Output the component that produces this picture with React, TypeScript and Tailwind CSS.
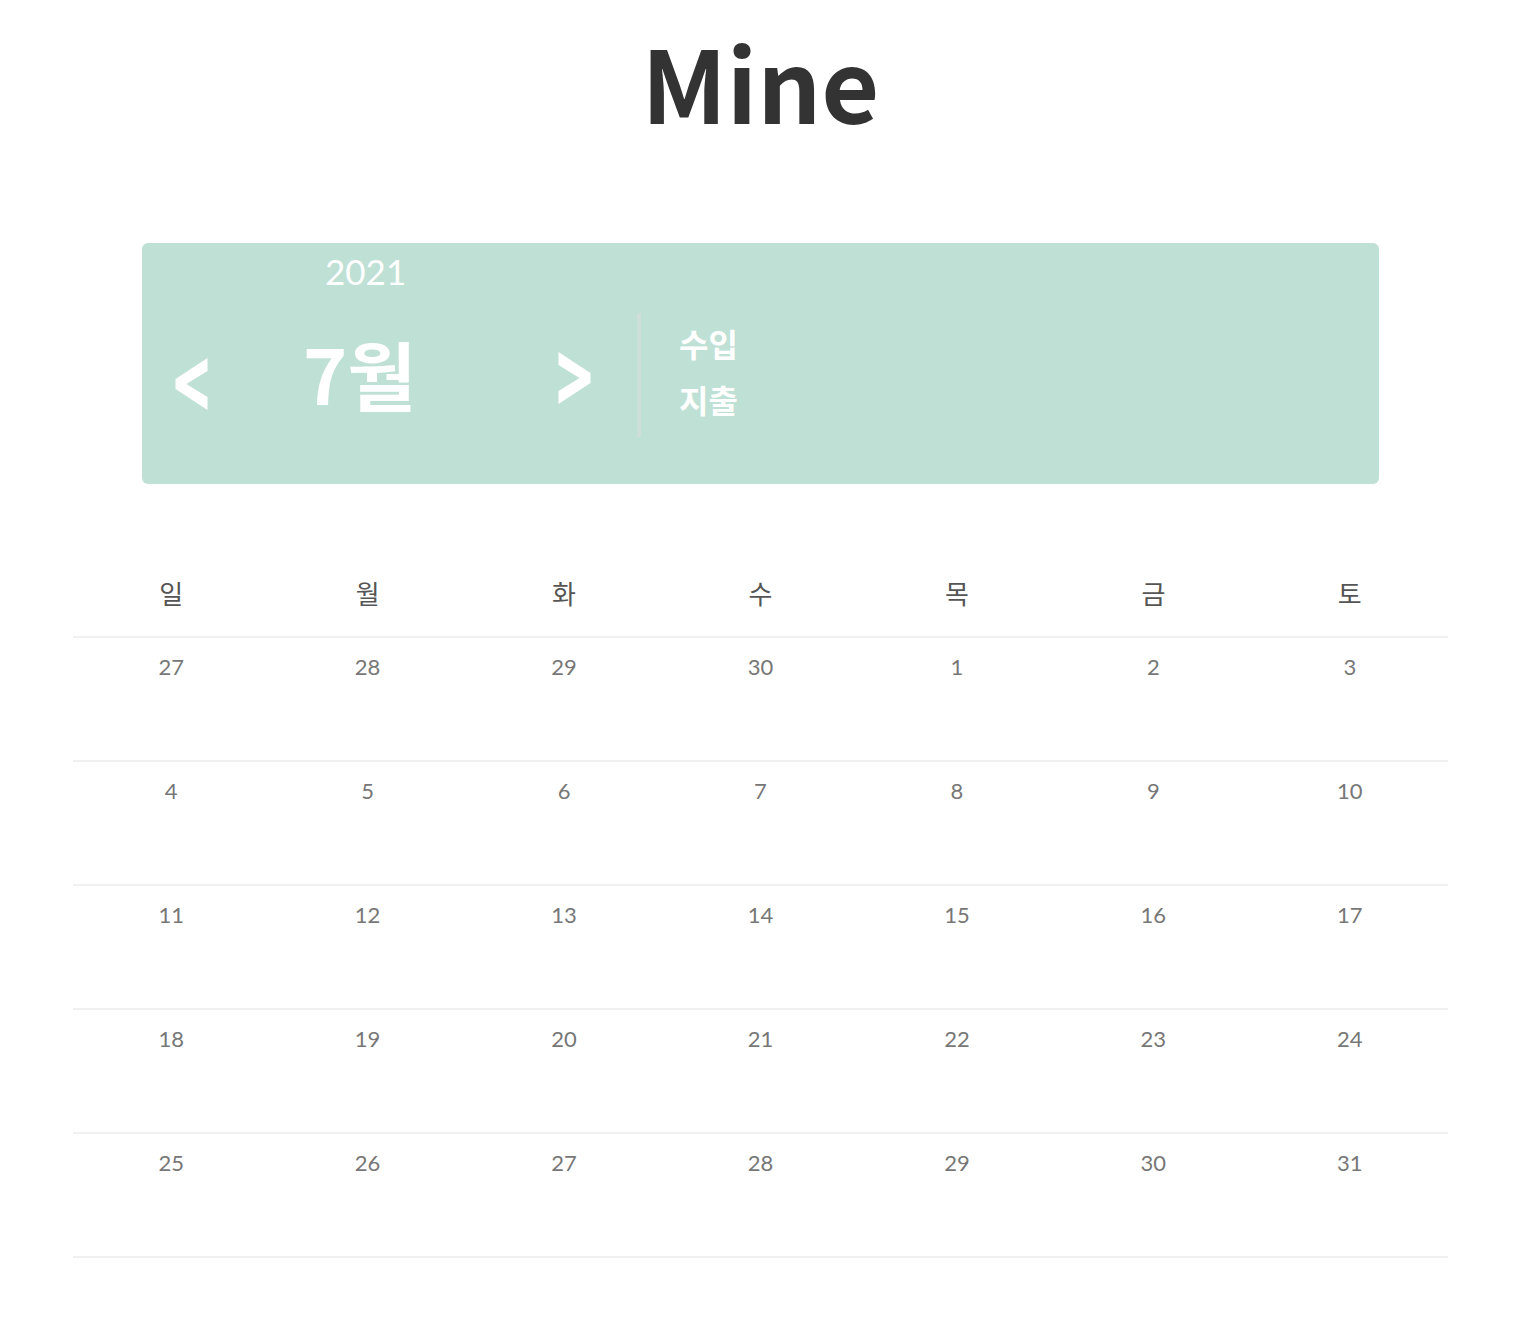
const WEEKDAYS = ['일', '월', '화', '수', '목', '금', '토']

// 2021년 7월: 6/27 ~ 7/31
const WEEKS: number[][] = [
  [27, 28, 29, 30, 1, 2, 3],
  [4, 5, 6, 7, 8, 9, 10],
  [11, 12, 13, 14, 15, 16, 17],
  [18, 19, 20, 21, 22, 23, 24],
  [25, 26, 27, 28, 29, 30, 31],
]

function Chevron({ dir }: { dir: 'left' | 'right' }) {
  const pts = dir === 'left'
    ? '32,0 32,13 11,26 32,39 32,52 0,31 0,21'
    : '0,0 0,13 21,26 0,39 0,52 32,31 32,21'
  return (
    <svg width="33" height="52" viewBox="0 0 32 52" className="block">
      <polygon points={pts} fill="#ffffff" />
    </svg>
  )
}

function MonthHeader() {
  return (
    <div className="w-[1237px] h-[241px] bg-[#bfe0d5] rounded-md flex items-start text-white">
      {/* 연/월 선택 */}
      <div className="w-[495px] flex flex-col">
        <div className="mt-[11px] ml-[183px] text-[35px] leading-none font-['Lato',sans-serif]">2021</div>
        <div className="flex items-start h-[124px] mt-[23px] pl-[33px]">
          <button className="mt-[46px]" aria-label="이전 달">
            <Chevron dir="left" />
          </button>
          <div className="w-[350px] pl-[95px] mt-[23px] text-[75px] leading-none font-bold">7월</div>
          <button className="mt-[40px]" aria-label="다음 달">
            <Chevron dir="right" />
          </button>
        </div>
      </div>
      <div className="w-[4px] h-[124px] mt-[70px] bg-[#cddfd8]" />
      <div className="ml-[38px] mt-[72px] flex flex-col text-[32px] leading-[56px] font-bold">
        <span>수입</span>
        <span>지출</span>
      </div>
    </div>
  )
}

function Calendar() {
  return (
    <div className="w-[1375px] mt-[89px]">
      <div className="grid grid-cols-7 pb-[24px] border-b-2 border-[#f0f0f0]">
        {WEEKDAYS.map((d) => (
          <div key={d} className="text-center text-[26px] leading-[39px] text-[#555555]">
            {d}
          </div>
        ))}
      </div>
      {WEEKS.map((week, wi) => (
        <div key={wi} className="grid grid-cols-7 h-[124px] border-b-2 border-[#f0f0f0]">
          {week.map((day, di) => (
            <div
              key={di}
              className="pt-[12px] text-center text-[22px] leading-[33px] text-[#777777] font-['Lato',sans-serif]"
            >
              {day}
            </div>
          ))}
        </div>
      ))}
    </div>
  )
}

export default function App() {
  return (
    <div className="w-[1521px] min-h-[1318px] bg-white flex flex-col items-center font-['Noto_Sans_CJK_KR','Noto_Sans',sans-serif]">
      <h1 className="pt-[31px] text-[100px] leading-none font-bold text-[#333333]">Mine</h1>
      <div className="mt-[112px]">
        <MonthHeader />
      </div>
      <Calendar />
    </div>
  )
}
